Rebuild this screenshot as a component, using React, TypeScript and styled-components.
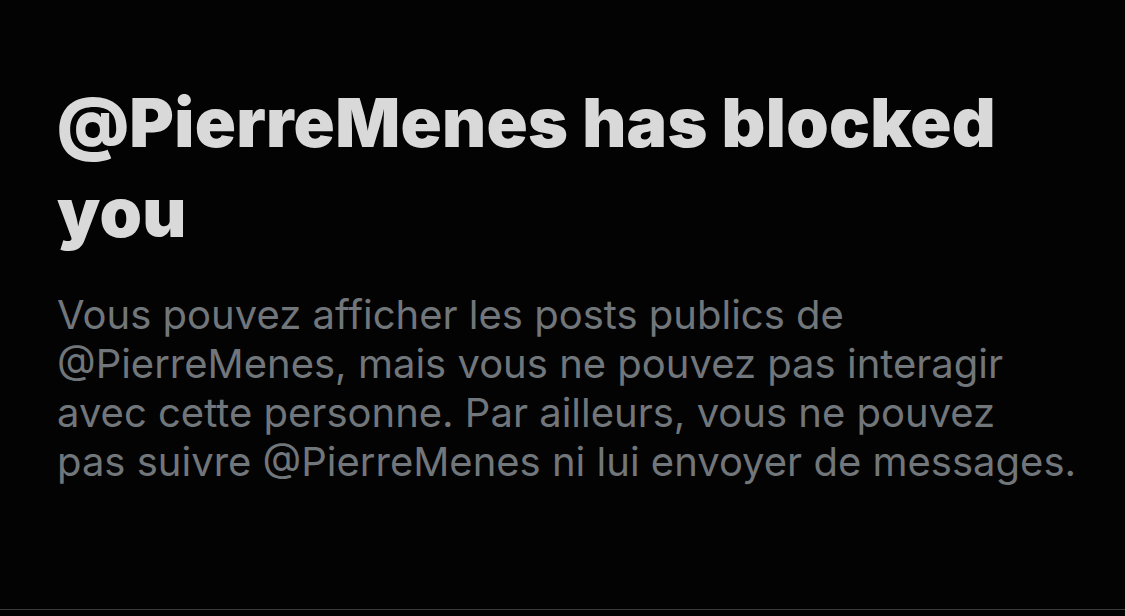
import React from 'react';
import styled, {createGlobalStyle} from "styled-components";

const GlobalStyle = createGlobalStyle`
    html, body {
        margin: 0;
        padding: 0;
        background: #030303;
    }
`

const Page = styled.div`
    width: 1125px;
    height: 616px;
    display: flex;
    flex-direction: column;
    background: #030303;
    font-family: Inter, "Liberation Sans", sans-serif;
    -webkit-font-smoothing: antialiased;
`

const Content = styled.section`
    padding: 77px 57px 0;
    display: flex;
    flex-direction: column;
    gap: 33px;
`

const Title = styled.h1`
    margin: 0;
    font-size: 68px;
    line-height: 90px;
    font-weight: 900;
    color: #d9d9d9;
    letter-spacing: 0.3px;
`

const Description = styled.p`
    margin: 0;
    font-size: 40px;
    line-height: 49px;
    font-weight: 400;
    color: #71767b;
    white-space: nowrap;
`

const Divider = styled.hr`
    margin: auto 0 6px;
    border: none;
    height: 1px;
    background: #3a3a3a;
`

export default function App() {
    const handle = "@PierreMenes";
    return (
        <>
            <GlobalStyle/>
            <Page>
                <Content>
                    <Title>{handle} has blocked<br/>you</Title>
                    <Description>
                        Vous pouvez afficher les posts publics de<br/>
                        {handle}, mais vous ne pouvez pas interagir<br/>
                        avec cette personne. Par ailleurs, vous ne pouvez<br/>
                        pas suivre {handle} ni lui envoyer de messages.
                    </Description>
                </Content>
                <Divider/>
            </Page>
        </>
    );
}
